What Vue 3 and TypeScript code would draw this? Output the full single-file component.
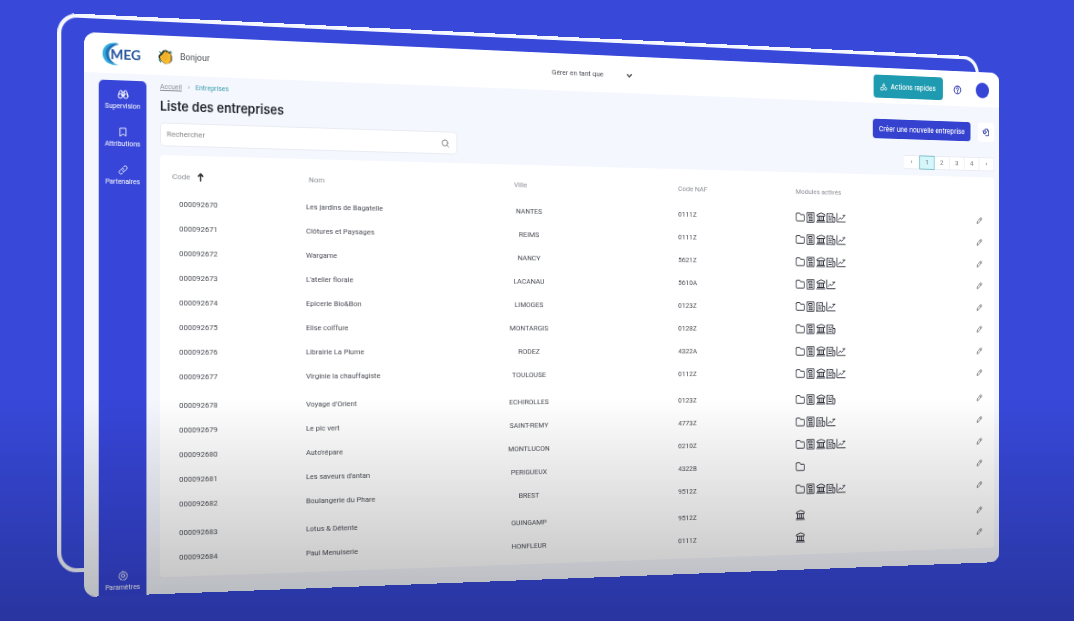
<script setup lang="ts">
type Module = 'folder' | 'calc' | 'bank' | 'invoice' | 'chart'

interface Company {
  code: string
  name: string
  city: string
  naf: string
  modules: Module[]
}

const all: Module[] = ['folder', 'calc', 'bank', 'invoice', 'chart']

const companies: Company[] = [
  { code: '000092670', name: 'Les jardins de Bagatelle', city: 'NANTES', naf: '0111Z', modules: all },
  { code: '000092671', name: 'Clôtures et Paysages', city: 'REIMS', naf: '0111Z', modules: all },
  { code: '000092672', name: 'Wargame', city: 'NANCY', naf: '5621Z', modules: all },
  { code: '000092673', name: "L'atelier florale", city: 'LACANAU', naf: '5610A', modules: ['folder', 'calc', 'bank', 'chart'] },
  { code: '000092674', name: 'Epicerie Bio&Bon', city: 'LIMOGES', naf: '0123Z', modules: ['folder', 'calc', 'invoice', 'chart'] },
  { code: '000092675', name: 'Elise coiffure', city: 'MONTARGIS', naf: '0128Z', modules: ['folder', 'calc', 'bank', 'invoice'] },
  { code: '000092676', name: 'Librairie La Plume', city: 'RODEZ', naf: '4322A', modules: all },
  { code: '000092677', name: 'Virginie la chauffagiste', city: 'TOULOUSE', naf: '0112Z', modules: all },
  { code: '000092678', name: "Voyage d'Orient", city: 'ECHIROLLES', naf: '0123Z', modules: ['folder', 'calc', 'bank', 'invoice'] },
  { code: '000092679', name: 'Le pic vert', city: 'SAINT-REMY', naf: '4773Z', modules: ['folder', 'calc', 'invoice', 'chart'] },
  { code: '000092680', name: "Auto'répare", city: 'MONTLUCON', naf: '0210Z', modules: all },
  { code: '000092681', name: "Les saveurs d'antan", city: 'PERIGUEUX', naf: '4322B', modules: ['folder'] },
  { code: '000092682', name: 'Boulangerie du Phare', city: 'BREST', naf: '9512Z', modules: all },
  { code: '000092683', name: 'Lotus & Détente', city: 'GUINGAMP', naf: '9512Z', modules: ['bank'] },
  { code: '000092684', name: 'Paul Menuiserie', city: 'HONFLEUR', naf: '0111Z', modules: ['bank'] },
]

const groupStarts = ['000092678', '000092683']

const moduleLabels: Record<Module, string> = {
  folder: 'Documents',
  calc: 'Calcul',
  bank: 'Banque',
  invoice: 'Factures',
  chart: 'Statistiques',
}

const icons: Record<Module, string> = {
  folder: 'M1.5 5v13.500a2 2 0 0 0 2 2h17a2 2 0 0 0 2-2V8.500a2 2 0 0 0-2-2h-8l-2-3.500h-7a2 2 0 0 0-2 2z',
  calc: 'M3.500 1.500h17v21h-17zM8 5h8v4.500H8zM8 13h1.500M11.500 13h1.500M15 13h1.500M8 16h1.500M11.500 16h1.500M15 16h1.500M8 19h1.500M11.500 19h1.500M15 19h1.500',
  bank: 'M12 2L2 6V9h20V6zM5 9.500v9M9.500 9.500v9M14.500 9.500v9M19 9.500v9M3 19h18M1.500 22h21',
  invoice: 'M2 22V2.500l2.500 1.500L7 2.500l2.500 1.500L12 2.500l2.500 1.500L17 2.500V22H2zM17 11h5v8.500a2.500 2.500 0 0 1-5 1.500M6 8.500h4M6 12.500h7M6 17h7M13 8.500h1',
  chart: 'M1.500 2v19.500h21M5 16.500l4.500-5 4 3 8-7.500M16.500 6.500h5.500',
}

const pages = [1, 2, 3, 4]
</script>

<template>
  <div class="stage">
    <div class="scene">
      <div class="outline"></div>
      <div class="panel">
        <header class="topbar">
          <div class="topbar-side">
            <svg class="logo" viewBox="0 0 41 24" role="img" aria-label="MEG">
              <path d="M17 1C7-1 0 5 1 13c1 7 8 11 16 9.500C9 21 5 17 5 11.500 5 6 10 2.500 17 1z" fill="#35addc" />
              <path d="M18 2C10 0 4 5 4 11.500c0 5.500 4 9.500 10 10-4-2-6.500-5-6.500-10C7.500 7 12 3 18 2z" fill="#2272b8" />
              <text x="9" y="17" class="logo-text">MEG</text>
            </svg>
            <svg class="clap" viewBox="0 0 28 28" aria-hidden="true">
              <path d="M1 12l3-3 6-7 5-1 4 2 4 1 4 8v9l-5 5-9 1-7-5-5-6z" fill="#2c3a2a" />
              <path d="M4 13l3-2 7-8 2 1-1 3 4-3 2 1-1 3 3-1 2 3v11l-4 5-7 1-7-5-3-5z" fill="#fbb92f" />
              <path d="M8 15l7-7M10 18l8-8M13 21l7-7" stroke="#d18d1c" stroke-width="1" fill="none" />
              <path d="M2 19l3 5M3 5l3 2M24 3l2 3" stroke="#1f7f88" stroke-width="2" />
            </svg>
            <span class="hello">Bonjour</span>
          </div>
          <div class="manage">
            <select aria-label="Gérer en tant que">
              <option>Gérer en tant que</option>
            </select>
            <svg class="chevron" viewBox="0 0 10 10" aria-hidden="true"><path d="M2 3.500l3 3 3-3" /></svg>
          </div>
          <div class="topbar-side end">
            <button class="quick" type="button">
              <svg viewBox="0 0 20 20" aria-hidden="true">
                <path d="M10 2l3.500 6h-7zM2 12h6v6H2zM15 12a3 3 0 1 1 0 6 3 3 0 0 1 0-6" />
              </svg>
              Actions rapides
            </button>
            <button class="help" type="button" aria-label="Aide">
              <svg viewBox="0 0 20 20" aria-hidden="true">
                <circle cx="10" cy="10" r="8" />
                <path d="M7.500 8a2.500 2.500 0 1 1 3.500 2.300c-.7.3-1 .8-1 1.700M10 14v1" />
              </svg>
            </button>
            <button class="avatar" type="button" aria-label="Profil"></button>
          </div>
        </header>

        <div class="body">
          <nav class="sidebar">
            <a href="#">
              <svg viewBox="0 0 24 24" aria-hidden="true">
                <circle cx="6.500" cy="15.500" r="4.500" /><circle cx="17.500" cy="15.500" r="4.500" />
                <path d="M2.500 13L5 5.500Q7.500 3 10 5.500V15M21.500 13L19 5.500Q16.500 3 14 5.500V15M10 8h4M10 13h4" />
              </svg>
              Supervision
            </a>
            <a href="#">
              <svg viewBox="0 0 24 24" aria-hidden="true"><path d="M5 2.500h14v19L12 16.500l-7 5z" /></svg>
              Attributions
            </a>
            <a href="#">
              <svg viewBox="0 0 24 24" aria-hidden="true">
                <path d="M10 14a4.500 4.500 0 0 0 6.500 0l4-4A4.500 4.500 0 0 0 14 3.500l-2 2M14 10a4.500 4.500 0 0 0-6.500 0l-4 4A4.500 4.500 0 0 0 10 20.500l2-2" />
              </svg>
              Partenaires
            </a>
            <a href="#" class="settings">
              <svg viewBox="0 0 24 24" aria-hidden="true">
                <circle cx="12" cy="12" r="4" />
                <path d="M12 2l2.500 2 3-.5 1.500 3 3 1.500-.5 3 1.500 2-2 2v3l-3 1-1.500 3-3-.5-2.500 1.500-2-2-3 .5-1-3-3-1.500.5-3L1.500 12l2-2v-3l3-1 1.500-3 2.500.5z" />
              </svg>
              Paramètres
            </a>
          </nav>

          <main>
            <div class="head">
              <div class="intro">
                <div class="crumbs">
                  <a href="#">Accueil</a><span class="sep">›</span><span class="here">Entreprises</span>
                </div>
                <h1>Liste des entreprises</h1>
                <div class="search">
                  <input type="search" placeholder="Rechercher" aria-label="Rechercher" />
                  <svg viewBox="0 0 20 20" aria-hidden="true"><circle cx="9" cy="9" r="7" /><path d="M14 14l4.500 4.500" /></svg>
                </div>
              </div>
              <div class="tools">
                <div class="tool-row">
                  <button class="create" type="button">Créer une nouvelle entreprise</button>
                  <button class="export" type="button" aria-label="Exporter">
                    <svg viewBox="0 0 20 20" aria-hidden="true">
                      <path d="M7 5V2.500h6l4 4V17.500H9M13 2.500v4h4M2.500 6.500h5v7h-3zM7.500 6.500l4 3.500-4 3.500" />
                    </svg>
                  </button>
                </div>
                <div class="pager">
                  <button type="button" aria-label="Page précédente">‹</button>
                  <button v-for="p in pages" :key="p" type="button" :class="{ active: p === 1 }">{{ p }}</button>
                  <button type="button" aria-label="Page suivante">›</button>
                </div>
              </div>
            </div>

            <div class="card">
              <table>
                <colgroup>
                  <col class="c-code" /><col class="c-name" /><col class="c-city" /><col class="c-naf" /><col /><col class="c-edit" />
                </colgroup>
                <thead>
                  <tr>
                    <th class="code">
                      Code
                      <svg viewBox="0 0 12 12" aria-hidden="true"><path d="M6 11V1.500M3 4.500l3-3 3 3" /></svg>
                    </th>
                    <th class="name">Nom</th>
                    <th class="city">Ville</th>
                    <th>Code NAF</th>
                    <th>Modules activés</th>
                    <th></th>
                  </tr>
                </thead>
                <tbody>
                  <tr v-for="c in companies" :key="c.code" :class="{ 'group-start': groupStarts.includes(c.code) }">
                    <td class="code">{{ c.code }}</td>
                    <td>{{ c.name }}</td>
                    <td class="city">{{ c.city }}</td>
                    <td class="naf">{{ c.naf }}</td>
                    <td>
                      <div class="modules">
                        <svg v-for="m in c.modules" :key="m" viewBox="0 0 24 24" role="img" :aria-label="moduleLabels[m]">
                          <path :d="icons[m]" />
                        </svg>
                      </div>
                    </td>
                    <td>
                      <button class="edit" type="button" :aria-label="'Modifier ' + c.name">
                        <svg viewBox="0 0 16 16" aria-hidden="true"><path d="M2 14l1-4.500L10.500 2a2 2 0 0 1 3 3L6 13zM9 3.500L12 6.500" /></svg>
                      </button>
                    </td>
                  </tr>
                </tbody>
              </table>
            </div>
          </main>
        </div>
      </div>
    </div>
  </div>
</template>

<style>
body {
  margin: 0;
}
</style>

<style scoped>
.stage {
  position: relative;
  box-sizing: border-box;
  min-height: 100vh;
  padding: 32px 0 24px 84px;
  overflow: hidden;
  background: #3849da;
  perspective: 1200px;
  perspective-origin: 84px 337px;
  font-family: Roboto, "Liberation Sans", sans-serif;
  font-size: 8px;
  line-height: 12px;
  color: #4a4d54;
}
.stage::after {
  content: "";
  position: absolute;
  inset: 0;
  background: linear-gradient(transparent 64%, rgba(0, 0, 0, 0.27) 100%);
  pointer-events: none;
}
.scene {
  position: relative;
  width: 100vw;
  transform: rotateY(10deg);
  transform-origin: left center;
  will-change: transform;
}
.outline {
  position: absolute;
  box-sizing: border-box;
  inset: -18px 28px 25px -27px;
  border: 4px solid #f4f7ff;
  border-radius: 20px;
}
.panel {
  position: relative;
  border-radius: 12px;
  background: #f4f7fe;
}
button,
input,
select {
  margin: 0;
  padding: 0;
  border: 0;
  background: none;
  font: inherit;
  color: inherit;
}
svg {
  display: block;
  flex: none;
  fill: none;
  stroke: currentColor;
  stroke-width: 2;
  stroke-linecap: round;
  stroke-linejoin: round;
}
.topbar {
  display: flex;
  align-items: center;
  height: 40px;
  padding: 2px 14px 0 18px;
  box-sizing: border-box;
  border-radius: 12px 12px 0 0;
  background: #fff;
}
.topbar-side {
  flex: 1;
  display: flex;
  align-items: center;
}
.end {
  justify-content: flex-end;
}
.logo {
  width: 41px;
  height: 24px;
  stroke: none;
}
.logo-text {
  font: bold 14px Lato, sans-serif;
  fill: #24539c;
}
.clap {
  width: 15px;
  height: 15px;
  margin: 0 8px 0 17px;
  stroke: none;
}
.hello {
  font-size: 9px;
}
.manage {
  display: flex;
  align-items: center;
  position: relative;
}
.manage select {
  appearance: none;
  width: 154px;
  height: 26px;
  padding-left: 48px;
}
.chevron {
  position: absolute;
  right: 10px;
  width: 8px;
  height: 8px;
}
.quick,
.create {
  font-family: Inter, sans-serif;
  font-weight: 500;
  color: #fff;
  border-radius: 4px;
}
.quick {
  display: flex;
  align-items: center;
  justify-content: center;
  gap: 4px;
  width: 91px;
  height: 26px;
  background: #1e9bb0;
}
.quick svg {
  width: 9px;
  height: 9px;
}
.help {
  margin: 0 19px 0 14px;
  color: #3843b8;
}
.help svg {
  width: 11px;
  height: 11px;
}
.avatar {
  width: 18px;
  height: 18px;
  border-radius: 50%;
  background: #3746d6;
}
.body {
  display: flex;
}
.sidebar {
  display: flex;
  flex-direction: column;
  gap: 14px;
  width: 49px;
  margin: 7px 14px 0 15px;
  padding: 8px 0 2px;
  box-sizing: border-box;
  border-radius: 5px 5px 0 0;
  background: #3746d8;
}
.sidebar a {
  display: flex;
  flex-direction: column;
  align-items: center;
  height: 24px;
  font-size: 7px;
  color: #fff;
  text-decoration: none;
}
.sidebar svg {
  width: 12px;
  height: 12px;
}
.sidebar a:nth-child(n + 2) svg {
  width: 10px;
  height: 10px;
  margin: 1px;
}
.sidebar .settings {
  margin-top: auto;
}
main {
  flex: 1;
  min-width: 0;
  padding: 6px 7px 17px 0;
}
.head {
  display: flex;
  justify-content: space-between;
}
.crumbs {
  display: flex;
  gap: 6px;
  font-size: 7px;
  color: #8b8f98;
}
.crumbs a {
  color: inherit;
}
.here {
  color: #3d9dab;
}
h1 {
  margin: 4px 0 8px;
  font: 600 13px/18px Inter, sans-serif;
  color: #23262f;
}
.search {
  display: flex;
  align-items: center;
  box-sizing: border-box;
  width: 323px;
  height: 24px;
  margin-bottom: 9px;
  padding: 0 8px 0 6px;
  border: 1px solid #e8ebf1;
  border-radius: 4px;
  background: #fff;
  color: #777;
}
.search input {
  flex: 1;
  min-width: 0;
  outline: 0;
  appearance: none;
}
.search input::placeholder {
  color: #888;
}
.search svg {
  width: 9px;
  height: 9px;
}
.tools {
  display: flex;
  flex-direction: column;
  align-items: flex-end;
  gap: 18px;
  padding-top: 12px;
}
.tool-row {
  display: flex;
  gap: 10px;
}
.create {
  width: 129px;
  height: 22px;
  background: #3541cf;
}
.export {
  display: grid;
  place-items: center;
  width: 22px;
  height: 22px;
  border-radius: 4px;
  background: #fff;
  color: #353fa8;
}
.export svg {
  width: 10px;
  height: 10px;
}
.pager {
  display: flex;
  border-radius: 3px;
  background: #fff;
}
.pager button {
  box-sizing: border-box;
  width: 20px;
  height: 16px;
  border: 1px solid #e8ebf1;
  border-left-width: 0;
  color: #777;
}
.pager .active {
  border: 1px solid #6fb9c2;
  background: #d5f6fa;
}
.card {
  padding-bottom: 7px;
  border-radius: 4px;
  background: #fff;
}
table {
  width: 100%;
  table-layout: fixed;
  border-collapse: collapse;
}
.c-code {
  width: 155px;
}
.c-name {
  width: 200px;
}
.c-city {
  width: 228px;
}
.c-naf {
  width: 146px;
}
.c-edit {
  width: 40px;
}
th {
  height: 30px;
  padding: 7px 0 0;
  text-align: left;
  font-weight: 400;
  color: #8b8e95;
}
th.code {
  padding-left: 13px;
}
th.code svg {
  display: inline-block;
  width: 9px;
  height: 9px;
  margin-left: 4px;
  vertical-align: -2px;
  color: #333;
}
th.name {
  padding-left: 3px;
}
th.city {
  padding-left: 33px;
}
td {
  height: 25px;
  padding: 0;
}
.group-start td {
  padding-top: 4px;
}
td.code {
  padding-left: 20px;
}
td.city {
  padding-right: 127px;
  text-align: center;
}
.modules {
  display: flex;
  gap: 1px;
}
.modules svg {
  width: 12px;
  height: 12px;
  color: #30323d;
}
.edit {
  display: block;
  margin: 0 auto;
  color: #777;
}
.edit svg {
  width: 8px;
  height: 8px;
}
</style>
